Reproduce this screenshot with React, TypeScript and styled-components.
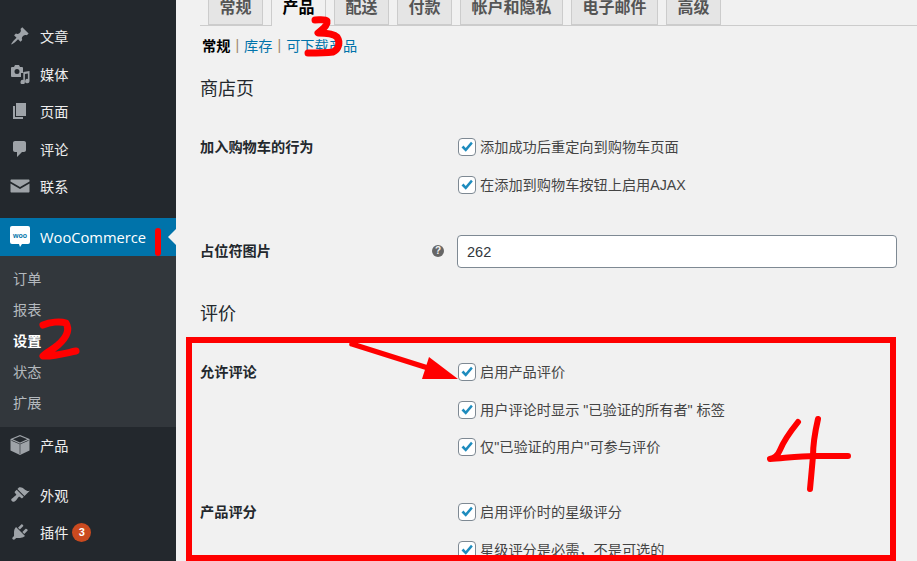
import type { ReactNode } from 'react';
import styled, { createGlobalStyle } from 'styled-components';

const GlobalStyle = createGlobalStyle`
  html, body {
    margin: 0;
    padding: 0;
    background: #f1f1f1;
    overflow: hidden;
  }
  * {
    box-sizing: border-box;
  }
`;

const Page = styled.div`
  position: relative;
  display: flex;
  width: 917px;
  height: 561px;
  overflow: hidden;
  background: #f1f1f1;
  color: #444;
  font-family: "Liberation Sans", "Noto Sans CJK SC", sans-serif;
  font-size: 14.2px;
`;

/* sidebar */

const Sidebar = styled.nav`
  flex: 0 0 176px;
  padding-top: 17.5px;
  background: #23282d;
`;

const MenuItem = styled.div<{ $gap?: number }>`
  display: flex;
  align-items: center;
  height: 37.5px;
  margin-top: ${props => props.$gap ?? 0}px;
  padding-left: 10px;
  color: #eee;
  svg {
    flex: 0 0 20px;
    margin-right: 10px;
    fill: #9ea3a8;
  }
`;

const ActiveItem = styled.div`
  position: relative;
  display: flex;
  align-items: center;
  height: 38px;
  margin-top: 12.5px;
  padding-left: 9px;
  background: #0073aa;
  color: #fff;
  font-family: "Open Sans", sans-serif;
  font-size: 14.7px;
  &:after {
    content: '';
    position: absolute;
    right: 0;
    top: 11px;
    border: 8px solid transparent;
    border-right-color: #f1f1f1;
    border-left-width: 0;
  }
`;

const WooLogo = styled.svg`
  flex: 0 0 22px;
  margin-right: 9px;
`;

const SubMenu = styled.div`
  padding: 8px 0 8px;
  background: #32373c;
`;

const SubItem = styled.div<{ $current?: boolean }>`
  height: 31px;
  padding-left: 13px;
  line-height: 30px;
  color: ${props => (props.$current ? '#fff' : '#b4b9be')};
  font-weight: ${props => (props.$current ? 700 : 400)};
`;

const Badge = styled.span`
  display: flex;
  align-items: center;
  justify-content: center;
  width: 19px;
  height: 19px;
  margin-left: 4px;
  border-radius: 50%;
  background: #ca4a1f;
  color: #fff;
  font-size: 11px;
  font-weight: 700;
`;

/* main column */

const Main = styled.main`
  flex: 1;
  padding-left: 24px;
`;

const TabBar = styled.div`
  display: flex;
  align-items: flex-end;
  gap: 8px;
  height: 26px;
  padding-left: 8px;
  border-bottom: 1px solid #ccc;
`;

const Tab = styled.div<{ $active?: boolean }>`
  height: ${props => (props.$active ? 26 : 25)}px;
  margin-bottom: ${props => (props.$active ? -1 : 0)}px;
  padding: 0 10.5px;
  border: 1px solid #ccc;
  border-top: 0;
  border-bottom: ${props => (props.$active ? '0' : '1px solid #ccc')};
  background: ${props => (props.$active ? '#f1f1f1' : '#e5e5e5')};
  color: ${props => (props.$active ? '#000' : '#555')};
  font-size: 16px;
  font-weight: 700;
  line-height: 15px;
`;

const SubNav = styled.div`
  display: flex;
  align-items: center;
  height: 38px;
  padding-left: 2px;
`;

const SubNavCurrent = styled.strong`
  color: #000;
`;

const SubNavLink = styled.a`
  color: #0073aa;
`;

const Separator = styled.span`
  margin: 0 5px;
  color: #a08a70;
`;

const SectionTitle = styled.h2<{ $gap?: number }>`
  height: 48px;
  margin: ${props => props.$gap ?? 0}px 0 0;
  color: #23282d;
  font-size: 18px;
  font-weight: 400;
  line-height: 50px;
`;

const FormRow = styled.div<{ $gap: number }>`
  display: grid;
  grid-template-columns: 257px 440px;
  margin-top: ${props => props.$gap}px;
`;

const RowLabel = styled.div<{ $tall?: boolean }>`
  display: flex;
  align-items: center;
  justify-content: space-between;
  height: ${props => (props.$tall ? 33 : 37.5)}px;
  padding-right: 13px;
  padding-bottom: ${props => (props.$tall ? 2 : 1)}px;
  color: #23282d;
  font-weight: 700;
`;

const LabelText = styled.span`
  position: relative;
  top: -1px;
`;

const HelpIcon = styled.span`
  display: flex;
  align-items: center;
  justify-content: center;
  width: 12px;
  height: 12px;
  border-radius: 50%;
  background: #666;
  color: #f1f1f1;
  font-size: 10px;
  font-weight: 700;
`;

const TextInput = styled.div`
  height: 33px;
  padding-left: 9px;
  border: 1px solid #7e8993;
  border-radius: 4px;
  background: #fff;
  color: #32373c;
  font-size: 14.5px;
  line-height: 32px;
`;

const CheckRow = styled.label`
  display: flex;
  align-items: center;
  height: 37.5px;
  padding-left: 1px;
  white-space: nowrap;
`;

const CheckBox = styled.span`
  display: flex;
  align-items: center;
  justify-content: center;
  flex: 0 0 18px;
  height: 18px;
  margin-right: 4px;
  border: 1px solid #7e8993;
  border-radius: 4px;
  background: #fff;
`;

const CheckText = styled.span`
  position: relative;
  top: -1px;
`;

/* the red marks somebody drew on the screenshot */

const ReviewHighlight = styled.div`
  position: absolute;
  left: 186px;
  top: 337px;
  width: 710px;
  height: 224px;
  border: 6px solid #f00;
`;

const Scribbles = styled.svg`
  position: absolute;
  left: 0;
  top: 0;
  pointer-events: none;
`;

const Ink = styled.path<{ $width?: number }>`
  fill: none;
  stroke: #f00;
  stroke-width: ${props => props.$width ?? 5};
  stroke-linecap: round;
  stroke-linejoin: round;
`;

const Icon = ({ d }: { d: string }) => (
  <svg width="20" height="20" viewBox="0 0 20 20">
    <path d={d} fillRule="evenodd" />
  </svg>
);

const icons = {
  pin: 'M10.44 3.02l1.82-1.82 6.36 6.35-1.83 1.82c-1.05-.68-2.48-.57-3.41.36l-.75.75c-.92.93-1.04 2.35-.35 3.41l-1.83 1.82-2.41-2.41-2.8 2.79c-.42.42-3.38 2.71-3.8 2.29s1.86-3.39 2.28-3.81l2.79-2.79L4.1 9.36l1.83-1.82c1.05.69 2.48.57 3.4-.36l.75-.75c.93-.92 1.05-2.35.36-3.41z',
  media: 'M5 1h4l1 2h2a1 1 0 0 1 1 1v5h-2v4H2a1 1 0 0 1-1-1V4a1 1 0 0 1 1-1h2zM7 5A2.500 2.500 0 1 0 7 10 2.500 2.500 0 0 0 7 5zM19.500 7v10a2.200 2.200 0 1 1-1.600-2V9.500l-3 .6V18a2.200 2.200 0 1 1-1.600-2V8z',
  page: 'M6 15V2h10v13H6zm-1 1h8v2H3V5h2v11z',
  comment: 'M5 2h9c1.100 0 2 .9 2 2v7c0 1.100-.9 2-2 2h-2l-5 5v-5H5c-1.100 0-2-.9-2-2V4c0-1.100.9-2 2-2z',
  mail: 'M1.500 3.500h17c.6 0 1 .4 1 1v1L10 11 .5 5.500v-1c0-.6.4-1 1-1zM.5 7.500L10 13l9.500-5.500V15.500c0 .6-.4 1-1 1h-17c-.6 0-1-.4-1-1z',
  box: 'M10 0l9.500 4v11.500L10 20 .5 15.500V4zM10 1.300L2.800 4.300 10 7.500 17.200 4.300zM1.500 5v.7L9.700 9.300v9.700h.6V9.300L18.500 5.700V5L10 8.700z',
  brush: 'M14.480 11.060L7.410 3.990l1.500-1.500c.5-.56 2.300-.47 3.510.32 1.210.8 1.430 1.280 2.910 2.100 1.180.64 2.450 1.260 4.450.85zm-.71.71L6.700 4.700 4.930 6.470c-.39.39-.39 1.020 0 1.410l1.060 1.060c.39.39.39 1.030 0 1.420-.6.6-1.430 1.110-2.210 1.690-.35.26-.7.53-1.010.84C1.430 13.230.76 14.800 1.430 15.500l1.060 1.060c.7.67 2.270 0 3.610-1.340.31-.31.58-.66.84-1.010.58-.78 1.090-1.610 1.690-2.210.39-.39 1.030-.39 1.420 0l1.060 1.060c.39.39 1.020.39 1.410 0z',
  plug: 'M13.110 4.360L9.870 7.600 8 5.730l3.240-3.240c.35-.34 1.050-.2 1.560.32.52.51.66 1.210.31 1.550zm-8 1.770l.91-1.120 9.010 9.010-1.190.84c-.71.71-2.630 1.160-3.820 1.160H6.140L4.900 17.260c-.59.59-1.540.59-2.120 0-.59-.58-.59-1.530 0-2.120l1.240-1.240v-3.880c0-1.130.4-3.190 1.090-3.890zm7.260 3.970l3.240-3.240c.34-.35 1.040-.21 1.550.31.52.51.66 1.210.31 1.550l-3.240 3.250z',
};

const Check = ({ children }: { children: ReactNode }) => (
  <CheckRow>
    <CheckBox>
      <svg width="14" height="14" viewBox="0 0 14 14">
        <path d="M1.500 7.500L3.500 5.500 5.700 8 11 1.800 12.800 3.500 5.800 11.800z" fill="#1e8cbe" />
      </svg>
    </CheckBox>
    <CheckText>{children}</CheckText>
  </CheckRow>
);

const tabs = ['常规', '产品', '配送', '付款', '帐户和隐私', '电子邮件', '高级'];

export default function App() {
  return (
    <Page>
      <GlobalStyle />
      <Sidebar>
        <MenuItem><Icon d={icons.pin} />文章</MenuItem>
        <MenuItem><Icon d={icons.media} />媒体</MenuItem>
        <MenuItem><Icon d={icons.page} />页面</MenuItem>
        <MenuItem><Icon d={icons.comment} />评论</MenuItem>
        <MenuItem><Icon d={icons.mail} />联系</MenuItem>
        <ActiveItem>
          <WooLogo width="22" height="23" viewBox="0 0 22 23">
            <path d="M3 1h16a2 2 0 0 1 2 2v14a2 2 0 0 1-2 2h-6l-2 3-1-3H3a2 2 0 0 1-2-2V3a2 2 0 0 1 2-2z" fill="#fff" />
            <text x="11" y="13" textAnchor="middle" fontSize="7" fontWeight="700" fill="#0073aa" fontFamily="Liberation Sans">woo</text>
          </WooLogo>
          WooCommerce
        </ActiveItem>
        <SubMenu>
          <SubItem>订单</SubItem>
          <SubItem>报表</SubItem>
          <SubItem $current>设置</SubItem>
          <SubItem>状态</SubItem>
          <SubItem>扩展</SubItem>
        </SubMenu>
        <MenuItem><Icon d={icons.box} />产品</MenuItem>
        <MenuItem $gap={12}><Icon d={icons.brush} />外观</MenuItem>
        <MenuItem><Icon d={icons.plug} />插件<Badge>3</Badge></MenuItem>
      </Sidebar>

      <Main>
        <TabBar>
          {tabs.map(tab => (
            <Tab key={tab} $active={tab === '产品'}>{tab}</Tab>
          ))}
        </TabBar>
        <SubNav>
          <SubNavCurrent>常规</SubNavCurrent>
          <Separator>|</Separator>
          <SubNavLink>库存</SubNavLink>
          <Separator>|</Separator>
          <SubNavLink>可下载产品</SubNavLink>
        </SubNav>
        <SectionTitle>商店页</SectionTitle>
        <FormRow $gap={16.5}>
          <RowLabel><LabelText>加入购物车的行为</LabelText></RowLabel>
          <div>
            <Check>添加成功后重定向到购物车页面</Check>
            <Check>在添加到购物车按钮上启用AJAX</Check>
          </div>
        </FormRow>
        <FormRow $gap={31.5}>
          <RowLabel $tall><LabelText>占位符图片</LabelText><HelpIcon>?</HelpIcon></RowLabel>
          <TextInput>262</TextInput>
        </FormRow>
        <SectionTitle $gap={21}>评价</SectionTitle>
        <FormRow $gap={16.5}>
          <RowLabel><LabelText>允许评论</LabelText></RowLabel>
          <div>
            <Check>启用产品评价</Check>
            <Check>用户评论时显示 "已验证的所有者" 标签</Check>
            <Check>仅"已验证的用户"可参与评价</Check>
          </div>
        </FormRow>
        <FormRow $gap={27.5}>
          <RowLabel><LabelText>产品评分</LabelText></RowLabel>
          <div>
            <Check>启用评价时的星级评分</Check>
            <Check>星级评分是必需，不是可选的</Check>
          </div>
        </FormRow>
      </Main>

      <ReviewHighlight />
      <Scribbles width="917" height="561" viewBox="0 0 917 561">
        <Ink $width={6} d="M158 231V253" />
        <Ink $width={7} d="M43 325C50 322 60 321 66 323C70 330 66 338 58 345C52 350 46 353 43 356C52 357 66 353 76 351" />
        <Ink $width={7} d="M315 20C320 20 325 19 327 21C328 25 322 30 318 33C326 33 334 34 337 37C341 43 338 50 333 52C325 53 315 53 308 53" />
        <Ink $width={6} d="M798 422C790 432 784 440 780 450C778 455 774 458 770 459C785 458 800 456 815 456C825 456 838 456 848 456" />
        <Ink $width={6} d="M818 419C815 432 813 445 813 456C812 468 811 478 810 489" />
        <Ink $width={5.5} d="M352 344L428 368" />
        <polygon points="429,357 458,379 422,379" fill="#f00" />
      </Scribbles>
    </Page>
  );
}
